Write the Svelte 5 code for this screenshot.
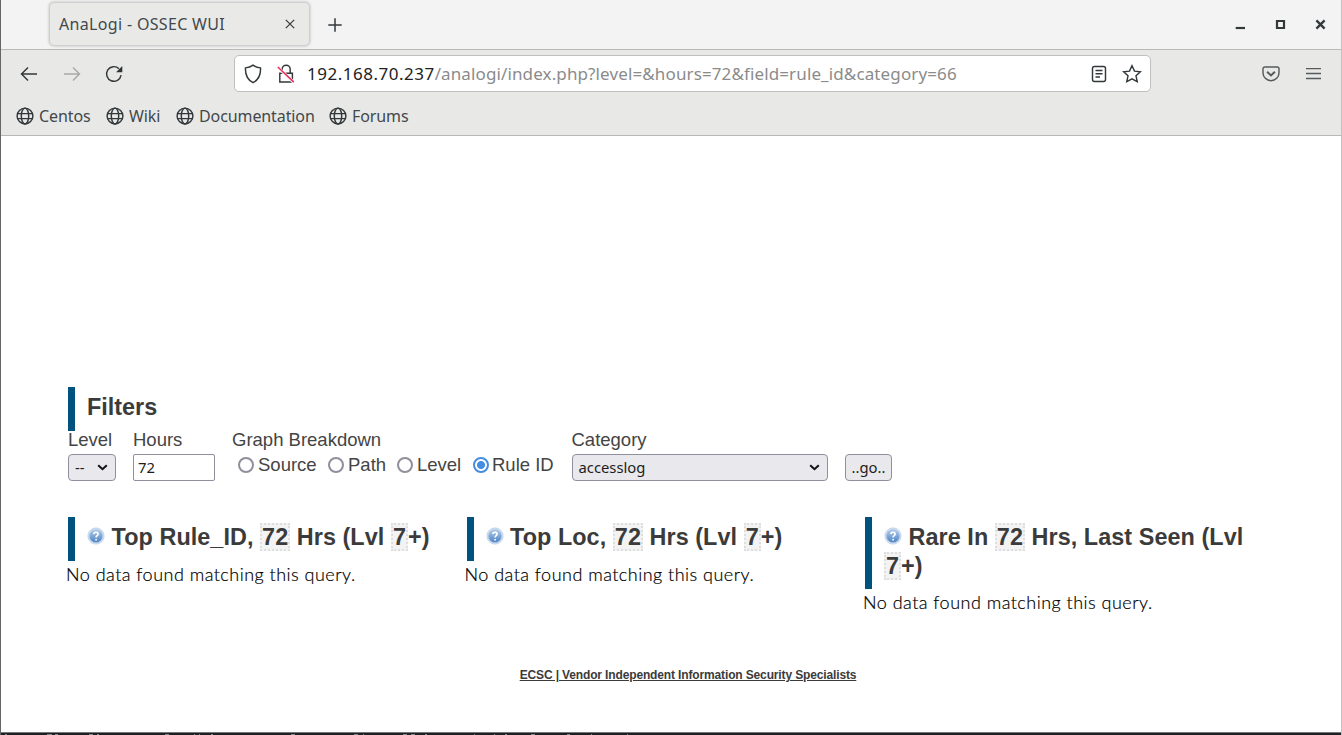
<script>
  const bookmarks = [
    { name: 'Centos', w: 90 },
    { name: 'Wiki', w: 70 },
    { name: 'Documentation', w: 153 },
    { name: 'Forums', w: 100 }
  ];
  const fields = [
    { name: 'Source', w: 90 },
    { name: 'Path', w: 69 },
    { name: 'Level', w: 75 },
    { name: 'Rule ID', w: 82, on: true }
  ];
  const panels = [
    { before: 'Top Rule_ID,', after: 'Hrs (Lvl' },
    { before: 'Top Loc,', after: 'Hrs (Lvl' },
    { before: 'Rare In', after: 'Hrs, Last Seen (Lvl' }
  ];
  // Tops of the terminal glyphs that show under the window: left offset, width
  const specks = [[4, 2], [46, 5], [54, 3], [88, 4], [96, 2], [164, 4], [193, 1], [198, 1], [210, 2], [290, 4], [353, 4], [362, 1], [402, 4], [410, 4], [424, 2], [473, 1], [493, 1], [504, 2], [530, 4], [566, 3], [590, 1], [626, 1]];
</script>

<div class="window">
  <header class="tabs">
    <div class="tab">
      <span class="tab-title">AnaLogi - OSSEC WUI</span>
      <svg width="10" height="10" viewBox="0 0 10 10"><path d="M.8.8l8.4 8.4M9.2.8L.8 9.2" /></svg>
    </div>
    <svg class="plus" width="14" height="14" viewBox="0 0 14 14"><path d="M7 .3v13.4M.3 7h13.4" /></svg>
    <div class="controls">
      <svg width="11" height="11" viewBox="0 0 11 11"><path d="M.7 9h9.3" stroke-width="2.2" /></svg>
      <svg width="11" height="11" viewBox="0 0 11 11"><path d="M2 2h7v7H2z" stroke-width="2.2" /></svg>
      <svg width="11" height="11" viewBox="0 0 11 11"><path d="M1.4 1.4l8.2 8.2M9.6 1.4L1.4 9.6" stroke-width="2.3" /></svg>
    </div>
  </header>

  <nav class="toolbar">
    <svg class="back" width="18" height="16" viewBox="0 0 18 16"><path d="M17 8H1.5M8 1.5L1.5 8 8 14.5" /></svg>
    <svg class="forward" width="18" height="16" viewBox="0 0 18 16"><path d="M1 8h15.5M10 1.5L16.5 8 10 14.5" /></svg>
    <svg class="reload" width="18" height="18" viewBox="0 0 18 18">
      <path d="M16.1 10.2A7.3 7.3 0 1 1 14 3.7" /><path class="fill" d="M17.3 1v6.2h-6.2z" />
    </svg>
    <div class="url">
      <svg class="shield" width="18" height="20" viewBox="0 0 18 20"><path d="M9 1.200c2.200 1.600 4.600 2.400 7.500 2.700.4 6.600-1.700 11.700-7.500 14.800C3.200 15.600 1.100 10.500 1.500 3.900 4.400 3.600 6.800 2.800 9 1.200z" /></svg>
      <svg class="lock" width="18" height="20" viewBox="0 0 18 20">
        <path d="M2.800 9.200h12.600v8.800H2.800zM5.200 9V5.200a4 4 0 0 1 8 0V9" />
        <path d="M1.400 3.800L16.800 18.400" class="halo" />
        <path d="M.8 3L16.800 18.200" class="slash" />
      </svg>
      <span class="address"><b>192.168.70.237</b><span>/analogi/index.php?level=&amp;hours=72&amp;field=rule_id&amp;category=66</span></span>
      <svg class="reader" width="16" height="18" viewBox="0 0 16 18"><rect x="1.500" y="1.500" width="13" height="15" rx="2" /><path d="M4.500 5.500h7M4.500 8.700h7M4.500 11.900h4.500" /></svg>
      <svg class="star" width="20" height="20" viewBox="0 0 20 20"><path d="M10 1.700l2.500 5.400 5.900.7-4.400 4 1.200 5.900L10 14.800l-5.200 2.900L6 11.800l-4.400-4 5.900-.7z" /></svg>
    </div>
    <svg class="pocket" width="18" height="16" viewBox="0 0 18 16"><path d="M2.800 1h12.400A1.800 1.800 0 0 1 17 2.800v3.900a8 8 0 0 1-16 0V2.800A1.800 1.800 0 0 1 2.800 1z" /><path class="chev" d="M5.100 5.700L9 9.400l3.900-3.700" /></svg>
    <svg class="menu" width="15" height="13" viewBox="0 0 15 13"><path d="M0 1.600h15M0 6.500h15M0 11.400h15" /></svg>
  </nav>

  <div class="bookmarks">
    {#each bookmarks as mark}
      <a style="width: {mark.w}px">
        <svg width="18" height="18" viewBox="0 0 18 18"><circle cx="9" cy="9" r="7.900" /><ellipse cx="9" cy="9" rx="3.700" ry="7.900" /><path d="M1 6.600h16M1 11.600h16" /></svg>
        <span>{mark.name}</span>
      </a>
    {/each}
  </div>

  <main>
    <h2 class="filters-title">Filters</h2>
    <form class="filters">
      <div class="level">
        <div class="label">Level</div>
        <div class="control select"><span>--</span><svg width="11" height="7" viewBox="0 0 11 7"><path d="M1.200 1.200l4.300 4 4.300-4" /></svg></div>
      </div>
      <div class="hours">
        <div class="label">Hours</div>
        <div class="control input">72</div>
      </div>
      <div class="breakdown">
        <div class="label">Graph Breakdown</div>
        <div class="radios">
          {#each fields as field}
            <div class="radio" style="width: {field.w}px"><i class:on={field.on}></i><span>{field.name}</span></div>
          {/each}
        </div>
      </div>
      <div class="category">
        <div class="label">Category</div>
        <div class="control select"><span>accesslog</span><svg width="11" height="7" viewBox="0 0 11 7"><path d="M1.200 1.200l4.300 4 4.300-4" /></svg></div>
      </div>
      <div class="control go">..go..</div>
    </form>

    <div class="panels">
      {#each panels as panel}
        <section>
          <h2>
            <svg class="help" width="18" height="18" viewBox="0 0 18 18">
              <defs><linearGradient id="orb" x1="0" y1="0" x2="0" y2="1"><stop offset="0" stop-color="#b4cdeb" /><stop offset="1" stop-color="#4b82c4" /></linearGradient></defs>
              <circle cx="9" cy="9" r="8.200" fill="#d3e0f1" /><circle cx="9" cy="9" r="6.600" fill="url(#orb)" />
              <path class="q" d="M6.900 7.100C7 4.500 11.200 4.700 11.100 7.200 11 8.700 9.100 8.500 9.100 10.400M9.100 12v1.600" />
            </svg>
            {panel.before} <em>72</em> {panel.after} <em>7</em>+)
          </h2>
          <p>No data found matching this query.</p>
        </section>
      {/each}
    </div>
    <footer><a>ECSC | Vendor Independent Information Security Specialists</a></footer>
  </main>
  <div class="edge">
    {#each specks as [x, w]}
      <i style="left: {x}px; width: {w}px"></i>
    {/each}
  </div>
</div>

<style>
  :global(body) { background: #fff; overflow: hidden; }
  * { box-sizing: border-box; }
  svg { display: block; flex: none; fill: none; stroke: #33393b; stroke-width: 1.45; }
  .window {
    width: 1342px; height: 735px; display: flex; flex-direction: column;
    border-left: 1px solid #666; border-right: 1px solid #c2c2c2; background: #fff;
    font-family: "Noto Sans", sans-serif; color: #42484b;
  }
  .tabs { height: 50px; flex: none; display: flex; align-items: center; background: #f3f3f3; border-bottom: 1px solid #b8b8b6; }
  .tab {
    width: 261px; height: 44px; margin: -1px 0 0 48px; padding: 0 14px 0 9px; display: flex; align-items: center; justify-content: space-between;
    background: #e9e9e8; border: 1px solid #cfcfcf; border-radius: 5px; box-shadow: 0 0 3px #bbb;
  }
  .tab-title { font-size: 16px; letter-spacing: .33px; white-space: nowrap; }
  .tab svg { stroke-width: 1.2; }
  .plus { margin-left: 18px; margin-top: 1px; stroke-width: 1.5; }
  .controls { margin-left: auto; margin-right: 15px; display: flex; gap: 29px; }
  .toolbar { height: 47px; flex: none; display: flex; align-items: center; background: #e8e8e7; }
  .back { margin-left: 19px; }
  .forward { margin-left: 25px; opacity: .35; }
  .reload { margin-left: 24px; }
  .reload .fill { fill: #2e3436; stroke: none; }
  .url {
    width: 917px; height: 37px; margin-left: 111px; padding: 0 8px 0 9px; display: flex; align-items: center;
    background: #fff; border: 1px solid #c0c0be; border-radius: 5px;
  }
  .lock { margin-left: 15px; }
  .lock .halo { stroke: #fff; stroke-width: 3; }
  .lock .slash { stroke: #e9305b; stroke-width: 1.6; }
  .address { margin-left: 12px; margin-top: -1px; font-size: 17px; letter-spacing: .12px; white-space: nowrap; color: #8b8b8b; }
  .address b { font-weight: 400; letter-spacing: .5px; color: #222; }
  .reader { margin-left: auto; }
  .star { margin-left: 15px; }
  .pocket { margin-left: 111px; stroke: #555b5d; }
  .pocket .chev { stroke-width: 2; }
  .menu { margin-left: 26px; stroke: #555b5d; }
  .bookmarks { height: 39px; flex: none; display: flex; align-items: center; padding: 0 0 0 15px; background: #e8e8e7; border-bottom: 1px solid #b8b8b6; font-size: 16px; letter-spacing: -.1px; }
  .bookmarks a { display: flex; align-items: center; gap: 5px; flex: none; white-space: nowrap; }
  .bookmarks span { margin-top: -1px; }
  main { flex: 1; min-height: 0; padding: 251px 0 0 67px; font-family: "Liberation Sans", Arial, sans-serif; color: #444; }
  h2 { margin: 0; padding: 6px 0 9px 12px; border-left: 7px solid #00527f; font-size: 23.400px; line-height: 28.500px; font-weight: 700; color: #3b3b3b; }
  .filters-title { height: 44px; }
  .filters { height: 86px; display: flex; font-size: 18.500px; }
  .label { height: 23px; line-height: 18px; white-space: nowrap; }
  .control { height: 27px; display: flex; align-items: center; border: 1px solid #8f8f9d; border-radius: 4px; font-family: "Noto Sans", sans-serif; font-size: 14.800px; line-height: 20px; padding-bottom: 2px; color: #1d1d20; }
  .select { justify-content: space-between; padding: 0 7px 2px 6px; background: #e9e9ed; }
  .select svg { stroke: #111; stroke-width: 2; margin-top: 2px; }
  .level { width: 65px; }
  .level .control { width: 48px; }
  .hours { width: 99px; }
  .hours .control { width: 82px; padding-left: 4px; border-radius: 2px; background: #fff; }
  .breakdown { width: 339.500px; }
  .radios { display: flex; padding: 0 0 0 6px; }
  .radio { display: flex; align-items: center; height: 22px; flex: none; gap: 4px; white-space: nowrap; }
  .radio i { width: 16px; height: 16px; flex: none; border: 2px solid #8f8f9d; border-radius: 50%; background: #fff; }
  .radio:last-child { padding-left: .5px; gap: 3.500px; }
  .radio i.on { border-color: #458de0; background: radial-gradient(circle, #458de0 3.600px, #fff 4.400px); }
  .category { width: 273.500px; }
  .category .control { width: 256px; }
  .go { width: 47px; margin-top: 23px; justify-content: center; background: #e9e9ed; }
  .panels { height: 149px; display: flex; }
  section { width: 398.500px; flex: none; }
  section h2 { width: 386px; letter-spacing: .06px; }
  .help { display: inline-block; vertical-align: 0; margin: 0 0 0 0; }
  .help circle { stroke: #a9c3e4; stroke-width: .5; }
  .help .q { stroke: #fff; stroke-width: 1.700; }
  em { font-style: normal; display: inline-block; height: 28px; line-height: 24px; vertical-align: top; background: #f3f3f3; border: 2px dotted #dedede; }
  p { margin: 0 0 0 -2px; font: 300 18px/26px Lato, sans-serif; letter-spacing: .48px; color: #000; white-space: nowrap; -webkit-text-stroke: .2px #000; }
  footer { width: 1240px; text-align: center; font-size: 12px; letter-spacing: -.14px; line-height: 18px; font-weight: 700; color: #3b3b3b; }
  footer a { text-decoration: underline; }
  .edge { height: 3px; flex: none; position: relative; background: #1c2022; border-top: 1px solid #777; }
  .edge i { position: absolute; top: 1px; height: 1px; background: #858787; }
</style>
